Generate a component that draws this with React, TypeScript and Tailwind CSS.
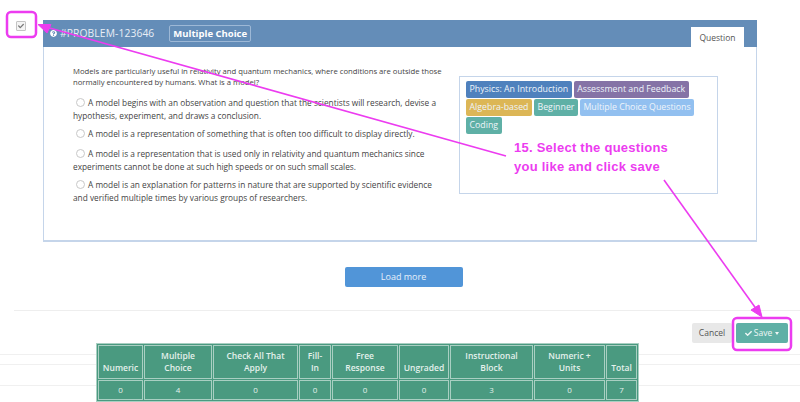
import { FaCheck, FaQuestionCircle } from "react-icons/fa";

const tags = [
  { label: "Physics: An Introduction", color: "bg-[#4f81bd]" },
  { label: "Assessment and Feedback", color: "bg-[#8573a6]" },
  { label: "Algebra-based", color: "bg-[#dcb656]" },
  { label: "Beginner", color: "bg-[#5fb0a6]" },
  { label: "Multiple Choice Questions", color: "bg-[#92c0f0]" },
  { label: "Coding", color: "bg-[#5fb0a6]" },
];

const columns = [
  { head: ["Numeric"], value: "0", width: "w-[45px]" },
  { head: ["Multiple", "Choice"], value: "4", width: "w-[68px]" },
  { head: ["Check All That", "Apply"], value: "0", width: "w-[85px]" },
  { head: ["Fill-", "In"], value: "0", width: "w-[32px]" },
  { head: ["Free", "Response"], value: "0", width: "w-[66px]" },
  { head: ["Ungraded"], value: "0", width: "w-[50px]" },
  { head: ["Instructional", "Block"], value: "3", width: "w-[83px]" },
  { head: ["Numeric +", "Units"], value: "0", width: "w-[71px]" },
  { head: ["Total"], value: "7", width: "w-[31px]" },
];

const Option = ({ children, className }: { children: React.ReactNode; className: string }) => (
  <p className={`whitespace-nowrap text-[8.3px] leading-[13px] ${className}`}>
    <span className="inline-block w-[9px] h-[9px] ml-[3px] mr-[3px] align-[-1px] rounded-full border border-[#c8c8c8] bg-white" />
    {children}
  </p>
);

const App = () => {
  return (
    <div className="relative w-[800px] h-[402px] overflow-hidden bg-white font-['Open_Sans',sans-serif] text-[#444]">
      <div className="pl-[43px] pt-5 w-[757px]">
        <div className="h-[222px] border-x border-b-2 border-[#c5d5ea]">
          <div className="flex items-end justify-between h-[27px] bg-[#648db8] -mx-px pr-[13px]">
            <div className="flex items-center self-center pl-[7px] text-white">
              <FaQuestionCircle className="w-[7px] h-[7px] mr-[3px]" />
              <span className="text-[10.3px] tracking-[0.1px] text-[#e8eef6]">#PROBLEM-123646</span>
              <span className="ml-[15px] px-[3px] h-[17px] leading-[15px] border border-[#9db8d6] rounded-[2px] text-[9.5px] font-bold">
                Multiple Choice
              </span>
            </div>
            <div className="w-[53px] h-[20px] leading-[21px] bg-white text-center text-[8.5px] text-[#555]">Question</div>
          </div>
          <div className="flex pl-[29px] pt-[19px]">
            <div className="w-[372px] shrink-0 text-[#444]">
              <p className="whitespace-nowrap text-[7.7px] leading-[11px] mb-[8px]">
                Models are particularly useful in relativity and quantum mechanics, where conditions are outside those
                <br />
                normally encountered by humans. What is a model?
              </p>
              <Option className="mb-[5px]">
                A model begins with an observation and question that the scientists will research, devise a
                <br />
                hypothesis, experiment, and draws a conclusion.
              </Option>
              <Option className="mb-[7px]">
                A model is a representation of something that is often too difficult to display directly.
              </Option>
              <Option className="mb-[5px]">
                A model is a representation that is used only in relativity and quantum mechanics since
                <br />
                experiments cannot be done at such high speeds or on such small scales.
              </Option>
              <Option className="">
                A model is an explanation for patterns in nature that are supported by scientific evidence
                <br />
                and verified multiple times by various groups of researchers.
              </Option>
            </div>
            <div className="ml-[14px] mt-[10px] w-[259px] h-[118px] border border-[#c5d5ea] px-[6px] py-[4px]">
              <div className="flex flex-wrap gap-x-[2px] gap-y-[1px]">
                {tags.map((tag) => (
                  <span
                    key={tag.label}
                    className={`${tag.color} h-[17px] leading-[17px] px-[3.5px] rounded-[2px] text-[8.8px] text-[#eef4fa]`}
                  >
                    {tag.label}
                  </span>
                ))}
              </div>
            </div>
          </div>
        </div>
      </div>

      <div className="flex justify-center pt-[25px]">
        <button className="w-[118px] h-[20px] ml-[7px] rounded-[2px] bg-[#5195d8] text-[9px] text-[#e6f0fa]">Load more</button>
      </div>

      <div className="mt-[23px] ml-[14px] border-t border-[#eeeeee]">
        <div className="flex justify-end gap-[4px] h-[43px] pt-[12px] pr-[12px]">
          <button className="w-[40px] h-[20px] rounded-[2px] bg-[#e8e8e8] text-[8.5px] text-[#555]">Cancel</button>
          <button className="flex items-center justify-center gap-[2px] w-[52px] h-[20px] rounded-[2px] bg-[#5fb0a6] text-[8.5px] text-[#eef7f5]">
            <FaCheck className="w-[7px] h-[7px]" />
            Save
            <span className="ml-[1px] border-x-[2.5px] border-t-[3px] border-x-transparent border-t-[#eef7f5]" />
          </button>
        </div>
      </div>
      <div className="border-t border-[#f0f0f0] h-[10px]" />
      <div className="border-t border-[#f0f0f0] h-[21px]" />
      <div className="border-t border-[#f0f0f0]" />

      <table className="absolute left-[96px] top-[343px] border-separate border-spacing-[1px] bg-[#4a9a80] border border-[#a9cfc2] text-[8.5px] text-[#e4f1ec] text-center">
        <tbody>
          <tr>
            {columns.map((col) => (
              <th key={col.head[0]} className={`${col.width} h-[34px] p-0 font-semibold leading-[12px] border border-[#a9cfc2] align-bottom pb-[4px]`}>
                {col.head.map((line) => (
                  <div key={line}>{line}</div>
                ))}
              </th>
            ))}
          </tr>
          <tr>
            {columns.map((col) => (
              <td key={col.head[0]} className="h-[20px] p-0 text-[8px] border border-[#a9cfc2]">
                {col.value}
              </td>
            ))}
          </tr>
        </tbody>
      </table>

      <div className="absolute left-[16px] top-[21px] w-[10px] h-[10px] flex items-center justify-center border border-[#c4c4c4] bg-[#f4f4f4] rounded-[1px]">
        <FaCheck className="w-[6px] h-[6px] text-[#777]" />
      </div>

      {/* callout drawn on top of the screenshot */}
      <svg className="absolute left-0 top-0" width="800" height="402" fill="none" stroke="#ec3cf0">
        <rect x="7" y="12" width="29" height="25" rx="4" strokeWidth="2.5" />
        <rect x="733" y="318" width="58" height="32" rx="4" strokeWidth="2.5" />
        <path d="M46 27L506 156" strokeWidth="1.6" />
        <path d="M38 24.5L51 24.5L47 33Z" fill="#ec3cf0" strokeWidth="1" />
        <path d="M664 180L757 310" strokeWidth="1.6" />
        <path d="M762 317L751 310L759 305Z" fill="#ec3cf0" strokeWidth="1" />
      </svg>
      <div className="absolute left-[514px] top-[138px] font-['Liberation_Sans',sans-serif] font-bold text-[13px] leading-[19px] tracking-[0.25px] text-[#ec3cf0]">
        15. Select the questions
        <br />
        you like and click save
      </div>
    </div>
  );
};

export default App;
